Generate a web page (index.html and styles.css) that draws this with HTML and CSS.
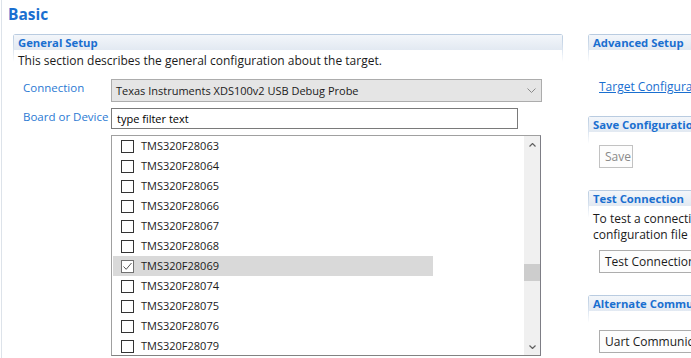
FILE: index.html
```html
<!DOCTYPE html>
<html>

<head>
    <title>Basic</title>
    <link rel="stylesheet" href="styles.css">
</head>

<body>
    <div class="page">
        <h1 class="page-title">Basic</h1>

        <div class="columns">
            <!-- left column: general setup -->
            <div class="col-main">
                <section class="group">
                    <div class="group-head">General Setup</div>
                    <p class="group-desc">This section describes the general configuration about the target.</p>

                    <div class="form">
                        <div class="form-label">Connection</div>
                        <div class="combo">
                            <span>Texas Instruments XDS100v2 USB Debug Probe</span>
                            <svg class="combo-arrow" width="9" height="5" viewBox="0 0 9 5">
                                <path d="M0.5 0.5 L4.5 4.5 L8.5 0.5" fill="none" stroke="#8a8a8a" stroke-width="1" />
                            </svg>
                        </div>

                        <div class="form-label">Board or Device</div>
                        <div class="filter">type filter text</div>

                        <div></div>
                        <div class="list">
                            <div class="list-items" id="deviceList"></div>
                            <div class="scrollbar">
                                <div class="scroll-btn">
                                    <svg width="7" height="4" viewBox="0 0 7 4">
                                        <path d="M0.5 3.5 L3.5 0.5 L6.5 3.5" fill="none" stroke="#606060" stroke-width="1.2" />
                                    </svg>
                                </div>
                                <div class="scroll-track">
                                    <div class="scroll-thumb" style="margin-top: 111px"></div>
                                </div>
                                <div class="scroll-btn">
                                    <svg width="7" height="4" viewBox="0 0 7 4">
                                        <path d="M0.5 0.5 L3.5 3.5 L6.5 0.5" fill="none" stroke="#606060" stroke-width="1.2" />
                                    </svg>
                                </div>
                            </div>
                        </div>
                    </div>
                </section>
            </div>

            <!-- right column -->
            <div class="col-side">
                <section class="group">
                    <div class="group-head">Advanced Setup</div>
                    <div class="group-body body-advanced">
                        <a class="link" href="#">Target Configuration: all connections</a>
                    </div>
                </section>

                <section class="group">
                    <div class="group-head">Save Configuration</div>
                    <div class="group-body body-save">
                        <button class="btn" disabled>Save</button>
                    </div>
                </section>

                <section class="group">
                    <div class="group-head">Test Connection</div>
                    <div class="group-body body-test">
                        <p class="side-text">To test a connection, all changes must have been saved,<br>configuration file contains no errors and the connection type supports it.</p>
                        <button class="btn">Test Connection</button>
                    </div>
                </section>

                <section class="group">
                    <div class="group-head">Alternate Communication</div>
                    <div class="group-body body-alt">
                        <button class="btn">Uart Communication</button>
                    </div>
                </section>
            </div>
        </div>
    </div>

    <script>
        // Fill the device list
        const devices = [
            'TMS320F28063', 'TMS320F28064', 'TMS320F28065', 'TMS320F28066',
            'TMS320F28067', 'TMS320F28068', 'TMS320F28069', 'TMS320F28074',
            'TMS320F28075', 'TMS320F28076', 'TMS320F28079'
        ];
        const selected = 'TMS320F28069';
        const list = document.getElementById('deviceList');

        devices.forEach(name => {
            const row = document.createElement('div');
            row.className = name === selected ? 'item selected' : 'item';
            row.innerHTML = `
                <span class="check">${name === selected ? '<svg width="11" height="11" viewBox="0 0 11 11"><path d="M1.5 5.5 L4.2 8.3 L9.5 2" fill="none" stroke="#555" stroke-width="1" /></svg>' : ''}</span>
                <span class="item-name">${name}</span>
            `;
            list.appendChild(row);
        });
    </script>
</body>

</html>
```

FILE: styles.css
```css
body {
    margin: 0;
    padding: 0;
    background: #ffffff;
    color: #1b1b1b;
    font-family: "Open Sans", "Noto Sans", sans-serif;
    font-size: 12px;
    width: 691px;
    height: 358px;
    overflow: hidden;
}

.page {
    margin-left: 1px;
    border-left: 1px solid #dde3ea;
    height: 358px;
    padding-left: 6px;
}

.page-title {
    margin: 0;
    padding-top: 4px;
    height: 34px;
    box-sizing: border-box;
    font-size: 15.5px;
    line-height: 20px;
    font-weight: bold;
    color: #1a6fd0;
}

.columns {
    display: flex;
    gap: 25px;
    padding-left: 5px;
}

.col-main {
    width: 550px;
    flex-shrink: 0;
}

.col-side {
    width: 320px;
    flex-shrink: 0;
    display: flex;
    flex-direction: column;
    gap: 22px;
}

/* section with the faded border */
.group {
    border-radius: 3px 3px 0 0;
    border: 1px solid transparent;
    border-bottom: 0;
    background:
        linear-gradient(#ffffff, #ffffff) padding-box,
        linear-gradient(#b8cbe0, #d6e1ee 14px, rgba(255, 255, 255, 0) 28px) border-box;
}

.group-head {
    height: 15px;
    line-height: 15px;
    padding-left: 4px;
    font-size: 11.3px;
    font-weight: bold;
    color: #1a6fd0;
    white-space: nowrap;
    background: linear-gradient(#f3f6fa, #e2e9f2);
}

.group-desc {
    margin: 3px 0 0 4px;
    line-height: 16px;
    white-space: nowrap;
}

.form {
    display: grid;
    grid-template-columns: 88px 431px;
    row-gap: 6px;
    margin-top: 10px;
    padding-left: 9px;
}

.form-label {
    color: #2b7ad3;
    font-size: 11.5px;
    line-height: 17px;
    white-space: nowrap;
}

.combo {
    height: 23px;
    box-sizing: border-box;
    border: 1px solid #acacac;
    background: #e5e5e5;
    display: flex;
    align-items: center;
    justify-content: space-between;
    padding: 0 5px 0 4px;
    font-size: 11px;
}

.filter {
    width: 407px;
    height: 21px;
    box-sizing: border-box;
    border: 1px solid #7a7a7a;
    padding-left: 5px;
    line-height: 19px;
    font-size: 11px;
    color: #000000;
}

.list {
    width: 430px;
    height: 221px;
    box-sizing: border-box;
    border: 1px solid #a0a0a0;
    border-right-color: #7d7d85;
    border-bottom-color: #828282;
    display: flex;
    justify-content: space-between;
}

.list-items {
    display: flex;
    flex-direction: column;
}

.item {
    width: 320px;
    height: 20px;
    margin-left: 1px;
    padding-left: 8px;
    display: flex;
    align-items: center;
    gap: 7px;
    box-sizing: border-box;
}

.item.selected {
    background: #d9d9d9;
}

.check {
    width: 13px;
    height: 13px;
    box-sizing: border-box;
    border: 1px solid #333333;
    background: #ffffff;
    display: flex;
}

.item.selected .check {
    border-color: #707070;
}

.item-name {
    font-size: 11px;
    line-height: 20px;
}

.scrollbar {
    width: 16px;
    background: #f0f0f0;
    display: flex;
    flex-direction: column;
}

.scroll-btn {
    height: 17px;
    display: flex;
    align-items: center;
    justify-content: center;
}

.scroll-track {
    flex: 1;
}

.scroll-thumb {
    height: 17px;
    background: #cdcdcd;
}

/* right column */
.group-body {
    padding-left: 10px;
}

.body-advanced {
    padding-top: 30px;
    line-height: 14px;
}

.body-save {
    padding-top: 13px;
}

.body-test {
    padding-top: 5px;
    padding-left: 4px;
}

.body-alt {
    padding-top: 19px;
}

.link {
    color: #1a6fd0;
    white-space: nowrap;
}

.side-text {
    margin: 0 0 7px 0;
    line-height: 16px;
    white-space: nowrap;
}

.body-test .btn {
    margin-left: 6px;
}

.btn {
    display: block;
    height: 23px;
    padding: 0 5px;
    border: 1px solid #adadad;
    background: #fdfdfd;
    font-family: inherit;
    font-size: 12px;
    color: #1b1b1b;
    white-space: nowrap;
    text-align: left;
    width: 200px;
}

.btn:disabled {
    width: 34px;
    border-color: #c2c2c2;
    color: #8a8a8a;
}
```
